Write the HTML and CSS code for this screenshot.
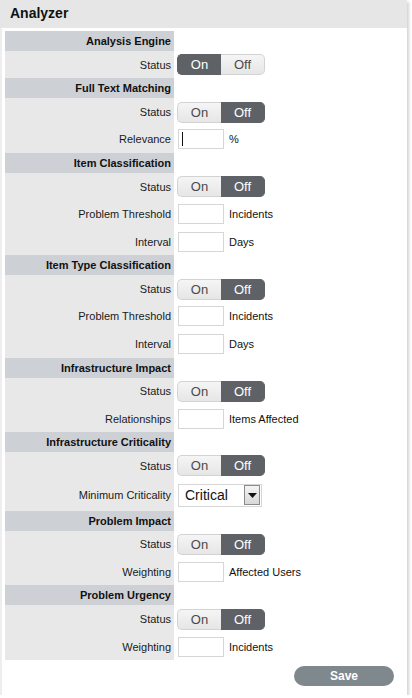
FILE: index.html
```html
<!DOCTYPE html>
<html>
<head>
<meta charset="utf-8">
<link rel="stylesheet" href="styles.css">
</head>
<body>
<div class="panel">
  <div class="title">Analyzer</div>
  <div class="body">
    <div class="form">
      <div class="sec"><div class="lab">Analysis Engine</div></div>
      <div class="row"><div class="lab">Status</div><div class="val"><div class="toggle"><span class="opt on">On</span><span class="opt">Off</span></div></div></div>

      <div class="sec"><div class="lab">Full Text Matching</div></div>
      <div class="row"><div class="lab">Status</div><div class="val"><div class="toggle"><span class="opt">On</span><span class="opt on">Off</span></div></div></div>
      <div class="row"><div class="lab">Relevance</div><div class="val"><input class="field focused" type="text"><span class="unit">%</span></div></div>

      <div class="sec"><div class="lab">Item Classification</div></div>
      <div class="row"><div class="lab">Status</div><div class="val"><div class="toggle"><span class="opt">On</span><span class="opt on">Off</span></div></div></div>
      <div class="row"><div class="lab">Problem Threshold</div><div class="val"><input class="field" type="text"><span class="unit">Incidents</span></div></div>
      <div class="row"><div class="lab">Interval</div><div class="val"><input class="field" type="text"><span class="unit">Days</span></div></div>

      <div class="sec"><div class="lab">Item Type Classification</div></div>
      <div class="row"><div class="lab">Status</div><div class="val"><div class="toggle"><span class="opt">On</span><span class="opt on">Off</span></div></div></div>
      <div class="row"><div class="lab">Problem Threshold</div><div class="val"><input class="field" type="text"><span class="unit">Incidents</span></div></div>
      <div class="row"><div class="lab">Interval</div><div class="val"><input class="field" type="text"><span class="unit">Days</span></div></div>

      <div class="sec"><div class="lab">Infrastructure Impact</div></div>
      <div class="row"><div class="lab">Status</div><div class="val"><div class="toggle"><span class="opt">On</span><span class="opt on">Off</span></div></div></div>
      <div class="row"><div class="lab">Relationships</div><div class="val"><input class="field" type="text"><span class="unit">Items Affected</span></div></div>

      <div class="sec"><div class="lab">Infrastructure Criticality</div></div>
      <div class="row"><div class="lab">Status</div><div class="val"><div class="toggle"><span class="opt">On</span><span class="opt on">Off</span></div></div></div>
      <div class="row tall"><div class="lab">Minimum Criticality</div><div class="val"><div class="select"><span class="sel-text">Critical</span><span class="sel-btn"><svg width="9" height="5" viewBox="0 0 9 5"><path d="M0 0H9L4.5 5Z" fill="#111"/></svg></span></div></div></div>

      <div class="sec"><div class="lab">Problem Impact</div></div>
      <div class="row"><div class="lab">Status</div><div class="val"><div class="toggle"><span class="opt">On</span><span class="opt on">Off</span></div></div></div>
      <div class="row"><div class="lab">Weighting</div><div class="val"><input class="field" type="text"><span class="unit">Affected Users</span></div></div>

      <div class="sec"><div class="lab">Problem Urgency</div></div>
      <div class="row"><div class="lab">Status</div><div class="val"><div class="toggle"><span class="opt">On</span><span class="opt on">Off</span></div></div></div>
      <div class="row"><div class="lab">Weighting</div><div class="val"><input class="field" type="text"><span class="unit">Incidents</span></div></div>
    </div>
    <div class="actions"><button class="save" type="button">Save</button></div>
  </div>
</div>
</body>
</html>
```
FILE: styles.css
```css
html, body {
  margin: 0;
  padding: 0;
  background: #ffffff;
}
body {
  font-family: "Liberation Sans", Arial, sans-serif;
  color: #1a1a1a;
}
.panel {
  width: 407px;
  background: #ffffff;
  box-shadow: 2px 2px 3px rgba(0, 0, 0, 0.18);
}
.title {
  height: 28px;
  line-height: 27px;
  padding-left: 10px;
  background: #e6e6e6;
  font-weight: bold;
  font-size: 14px;
  color: #111;
}
.body {
  border-left: 2px solid #eeeeee;
  padding: 3px 0 0 3px;
}
.form {
  display: flex;
  flex-direction: column;
}
.sec, .row {
  display: grid;
  grid-template-columns: 169px 1fr;
}
.sec {
  height: 20px;
}
.row {
  height: 27.4px;
}
.row.tall {
  height: 31px;
}
.lab {
  display: flex;
  align-items: center;
  justify-content: flex-end;
  padding-right: 3px;
  font-size: 11px;
  white-space: nowrap;
}
.sec .lab {
  background: #cdd0d4;
  font-weight: bold;
  color: #111;
}
.row .lab {
  background: #e8e8e8;
}
.val {
  display: flex;
  align-items: center;
  padding-left: 3px;
}
.toggle {
  display: flex;
  height: 21px;
}
.opt {
  box-sizing: border-box;
  width: 44px;
  height: 21px;
  display: flex;
  align-items: center;
  justify-content: center;
  font-size: 13px;
  color: #4a4a4a;
  border: 1px solid #d3d3d3;
  background: linear-gradient(#f5f5f5, #e6e6e6);
}
.opt:first-child {
  border-radius: 5px 0 0 5px;
  border-right: none;
}
.opt:last-child {
  border-radius: 0 5px 5px 0;
  border-left: none;
}
.opt.on {
  background: #5e6266;
  border-color: #5e6266;
  color: #ffffff;
}
.field {
  box-sizing: border-box;
  width: 46px;
  height: 20px;
  margin: 0 0 0 1px;
  padding: 0;
  border: 1px solid #d6d6d6;
  background: #ffffff;
  outline: none;
}
.field.focused {
  background: linear-gradient(#111, #111) no-repeat 3px 2px / 1px 14px, #ffffff;
}
.unit {
  margin-left: 5px;
  font-size: 11px;
  color: #111;
}
.select {
  box-sizing: border-box;
  margin-left: 1px;
  width: 84px;
  height: 23px;
  border: 1px solid #d6d6d6;
  background: #ffffff;
  display: flex;
  align-items: center;
  justify-content: space-between;
}
.sel-text {
  padding-left: 6px;
  font-size: 14px;
  color: #111;
}
.sel-btn {
  box-sizing: border-box;
  width: 16px;
  height: 20px;
  margin-right: 1px;
  border: 1px solid #8a8a8a;
  background: linear-gradient(#f4f4f4, #d8d8d8);
  display: flex;
  align-items: center;
  justify-content: center;
}
.actions {
  display: flex;
  justify-content: flex-end;
  padding: 6px 13px 9px 0;
}
.save {
  width: 100px;
  height: 20px;
  border: none;
  border-radius: 10px;
  background: #7f888d;
  color: #ffffff;
  font-family: "Liberation Sans", Arial, sans-serif;
  font-weight: bold;
  font-size: 12px;
  padding: 0;
}
```
